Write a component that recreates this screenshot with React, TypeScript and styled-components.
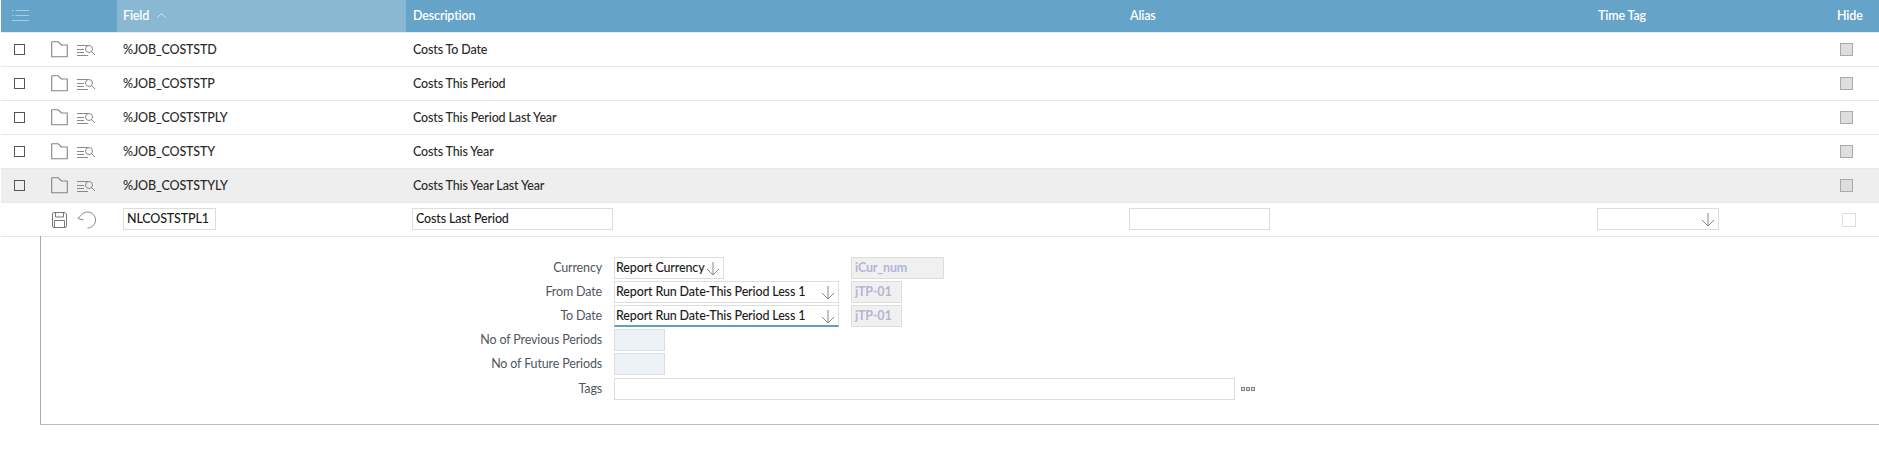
import * as React from 'react';
import styled, { createGlobalStyle } from 'styled-components';

const GlobalStyle = createGlobalStyle`
  html, body {
    margin: 0;
    padding: 0;
    background: #fff;
  }
  body {
    font-family: Lato, "Open Sans", sans-serif;
    font-size: 12.5px;
    letter-spacing: -0.15px;
    color: #2b2b2b;
  }
`;

const COLUMNS = '116px 289px 717px 468px 239px 49px';

const Page = styled.div`
  padding-left: 1px;
  width: 1878px;
`;

const HeaderRow = styled.div`
  display: grid;
  grid-template-columns: ${COLUMNS};
  height: 32px;
  background: #65a3c9;
  border-bottom: 1px solid #eaeaea;
`;

const HeaderCell = styled.div<{ $sorted?: boolean }>`
  display: flex;
  align-items: center;
  gap: 8px;
  padding-left: ${(props) => (props.$sorted ? '6px' : '7px')};
  padding-bottom: 2px;
  background: ${(props) => (props.$sorted ? '#8ab8d3' : 'transparent')};
  color: #fff;
  font-weight: 600;
`;

const MenuCell = styled(HeaderCell)`
  padding-left: 10px;
`;

const Row = styled.div<{ $selected?: boolean }>`
  display: grid;
  grid-template-columns: ${COLUMNS};
  align-items: center;
  height: 34px;
  box-sizing: border-box;
  border-bottom: 1px solid #e8e8e8;
  background: ${(props) => (props.$selected ? '#eeeeee' : '#fff')};
`;

const IconCell = styled.div`
  display: flex;
  align-items: center;
  padding-left: 13px;
`;

const EditIconCell = styled(IconCell)`
  padding-left: 51px;
  gap: 10px;
`;

const RowCheck = styled.span`
  width: 11px;
  height: 11px;
  box-sizing: border-box;
  border: 1px solid #555;
  margin-right: 26px;
`;

const FolderIcon = styled.svg`
  margin-right: 9px;
`;

const Cell = styled.div<{ $inset?: number }>`
  padding-left: ${(props) => props.$inset ?? 7}px;
  font-weight: 500;
  color: #2b2b2b;
  padding-bottom: 1px;
`;

const HideCell = styled.div`
  display: flex;
  padding-left: 10px;
`;

const HideBox = styled.span`
  width: 13px;
  height: 13px;
  box-sizing: border-box;
  border: 1px solid #aaa;
  background: #dedede;
`;

const EditHideBox = styled.span`
  width: 14px;
  height: 14px;
  margin-left: 2px;
  box-sizing: border-box;
  border: 1px solid #ddd;
  background: #fff;
`;

const TextBox = styled.div<{ $width: number }>`
  width: ${(props) => props.$width}px;
  height: 22px;
  box-sizing: border-box;
  border: 1px solid #ddd;
  padding: 0 3px;
  line-height: 20px;
  font-weight: 500;
  color: #1c1c1c;
  background: #fff;
`;

const SelectBox = styled(TextBox)<{ $focused?: boolean }>`
  position: relative;
  padding-left: 1px;
  white-space: nowrap;
  ${(props) => (props.$focused ? 'border-bottom: 2px solid #5f9fc4;' : '')}
`;

const SelectArrow = styled.svg`
  position: absolute;
  right: 3px;
  top: 3px;
`;

const ReadOnlyBox = styled(TextBox)<{ $offset?: number }>`
  background: #f0f0f0;
  color: #b3b6d2;
  font-weight: 700;
  padding-left: 3px;
  margin-left: ${(props) => props.$offset ?? 12}px;
`;

const NumberBox = styled(TextBox)`
  background: #edf2f9;
`;

const Detail = styled.div`
  margin-left: 39px;
  height: 189px;
  box-sizing: border-box;
  margin-top: -1px;
  border-left: 1px solid #aaa;
  border-bottom: 1px solid #bbb;
  padding-top: 21px;
  display: flex;
  flex-direction: column;
  gap: 2px;
`;

const FormRow = styled.div<{ $spaced?: boolean }>`
  display: flex;
  align-items: center;
  margin-top: ${(props) => (props.$spaced ? '1px' : '0')};
`;

const Label = styled.div`
  width: 561px;
  margin-right: 12px;
  text-align: right;
  color: #4f5660;
  padding-bottom: 2px;
`;

const Dots = styled.div`
  display: flex;
  gap: 1px;
  margin-left: 6px;
`;

const Dot = styled.span`
  width: 4px;
  height: 4px;
  box-sizing: border-box;
  border: 1px solid #888;
  background: #ddd;
`;

const fields = [
  { name: '%JOB_COSTSTD', description: 'Costs To Date' },
  { name: '%JOB_COSTSTP', description: 'Costs This Period' },
  { name: '%JOB_COSTSTPLY', description: 'Costs This Period Last Year' },
  { name: '%JOB_COSTSTY', description: 'Costs This Year' },
  { name: '%JOB_COSTSTYLY', description: 'Costs This Year Last Year' },
];

const Arrow = () => (
  <SelectArrow width="14" height="15" viewBox="0 0 14 15" fill="none" stroke="#888" strokeWidth="1">
    <path d="M7 1v13M1 8l6 6 6-6" />
  </SelectArrow>
);

const Folder = () => (
  <FolderIcon width="17" height="17" viewBox="0 0 17 17" fill="none" stroke="#858585" strokeWidth="1.1">
    <path d="M.7 15.8V.8h6.6l3.2 3.2h5.8v11.8z" strokeLinejoin="round" />
  </FolderIcon>
);

const ListSearch = () => (
  <svg width="18" height="12" viewBox="0 0 18 12" fill="none" stroke="#8a8a8a" strokeWidth="1">
    <path d="M0 1.5h11M0 5.5h7M0 8.5h7M0 11.5h11" />
    <circle cx="12" cy="5" r="3.5" />
    <path d="M14.5 7.5L18 11" />
  </svg>
);

const SaveIcon = () => (
  <svg width="15" height="16" viewBox="0 0 15 16" fill="none" stroke="#777" strokeWidth="1">
    <path d="M2 .5h11l1.5 1.5v12a1.5 1.5 0 0 1-1.5 1.5H2A1.5 1.5 0 0 1 .5 14V2A1.5 1.5 0 0 1 2 .5z" />
    <path d="M3.5 .5v4.5h8V.5M2.5 15.5V8.5h10v7" />
  </svg>
);

const UndoIcon = () => (
  <svg width="20" height="18" viewBox="0 0 20 18" fill="none" stroke="#888" strokeWidth="1">
    <path d="M5 3.2A8 8 0 1 1 10.5 17" />
    <path d="M1 7.5L5 3.2M1 7.5L6.5 9" />
  </svg>
);

export default function App() {
  return (
    <Page>
      <GlobalStyle />
      <HeaderRow>
        <MenuCell>
          <svg width="18" height="13" viewBox="0 0 18 13" fill="none" stroke="#a9cde2" strokeWidth="1.2">
            <path d="M1 1.5h1.5M4.5 1.5H18M1 6.5h1.5M4.5 6.5H18M1 11.5h17" />
          </svg>
        </MenuCell>
        <HeaderCell $sorted>
          Field
          <svg width="9" height="5" viewBox="0 0 9 5" fill="none" stroke="#d5e6f0" strokeWidth="1">
            <path d="M.5 4.5l4-4 4 4" />
          </svg>
        </HeaderCell>
        <HeaderCell>Description</HeaderCell>
        <HeaderCell>Alias</HeaderCell>
        <HeaderCell>Time Tag</HeaderCell>
        <HeaderCell>Hide</HeaderCell>
      </HeaderRow>

      {fields.map((field, index) => (
        <Row key={field.name} $selected={index === 4}>
          <IconCell>
            <RowCheck />
            <Folder />
            <ListSearch />
          </IconCell>
          <Cell $inset={6}>{field.name}</Cell>
          <Cell>{field.description}</Cell>
          <div />
          <div />
          <HideCell>
            <HideBox />
          </HideCell>
        </Row>
      ))}

      <Row>
        <EditIconCell>
          <SaveIcon />
          <UndoIcon />
        </EditIconCell>
        <Cell $inset={6}>
          <TextBox $width={93}>NLCOSTSTPL1</TextBox>
        </Cell>
        <Cell $inset={6}>
          <TextBox $width={201}>Costs Last Period</TextBox>
        </Cell>
        <Cell $inset={6}>
          <TextBox $width={141} />
        </Cell>
        <Cell $inset={6}>
          <SelectBox $width={122}>
            <Arrow />
          </SelectBox>
        </Cell>
        <HideCell>
          <EditHideBox />
        </HideCell>
      </Row>

      <Detail>
        <FormRow>
          <Label>Currency</Label>
          <SelectBox $width={110}>
            Report Currency
            <Arrow />
          </SelectBox>
          <ReadOnlyBox $width={93} $offset={127}>
            iCur_num
          </ReadOnlyBox>
        </FormRow>
        <FormRow>
          <Label>From Date</Label>
          <SelectBox $width={225}>
            Report Run Date-This Period Less 1
            <Arrow />
          </SelectBox>
          <ReadOnlyBox $width={51}>jTP-01</ReadOnlyBox>
        </FormRow>
        <FormRow>
          <Label>To Date</Label>
          <SelectBox $width={225} $focused>
            Report Run Date-This Period Less 1
            <Arrow />
          </SelectBox>
          <ReadOnlyBox $width={51}>jTP-01</ReadOnlyBox>
        </FormRow>
        <FormRow>
          <Label>No of Previous Periods</Label>
          <NumberBox $width={51} />
        </FormRow>
        <FormRow>
          <Label>No of Future Periods</Label>
          <NumberBox $width={51} />
        </FormRow>
        <FormRow $spaced>
          <Label>Tags</Label>
          <TextBox $width={621} />
          <Dots>
            <Dot />
            <Dot />
            <Dot />
          </Dots>
        </FormRow>
      </Detail>
    </Page>
  );
}
